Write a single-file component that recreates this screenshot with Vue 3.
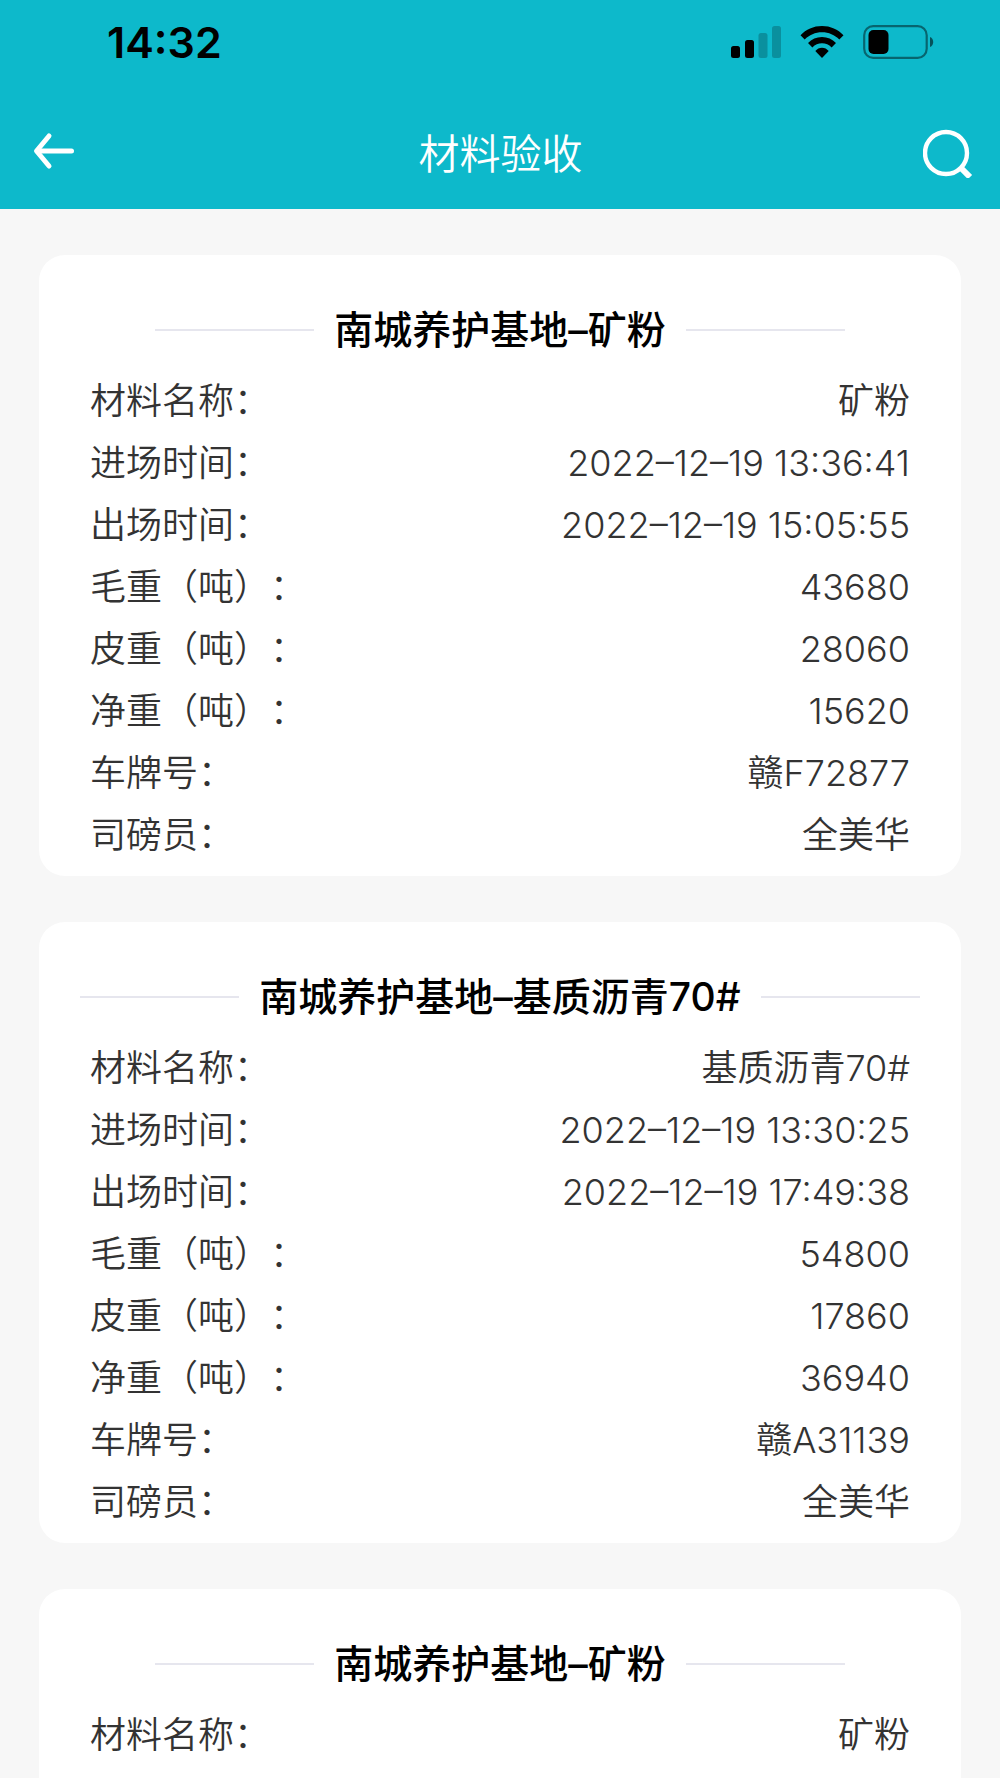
<template>
  <div class="page">
    <header class="header">
      <div class="status-bar">
        <span class="status-time">14:32</span>
        <div class="status-icons">
          <svg width="50" height="32" viewBox="0 0 50 32" aria-hidden="true">
            <rect x="0" y="20" width="9" height="12" rx="2.5" />
            <rect x="14" y="14" width="9" height="18" rx="2.5" />
            <rect x="27.500" y="7" width="9" height="25" rx="2.5" opacity="0.22" />
            <rect x="41" y="0" width="9" height="32" rx="2.5" opacity="0.22" />
          </svg>
          <svg width="44" height="32" viewBox="0 0 44 32" aria-hidden="true">
            <path d="M22 0C30.500 0 38 3.400 43.500 9.200L39.300 13.500C34.700 9 28.800 6.300 22 6.300S9.300 9 4.700 13.500L0.500 9.200C6 3.400 13.500 0 22 0Z" />
            <path d="M22 11C27.500 11 32.300 13.200 36 17L31.600 21.400C29 18.800 25.700 17.300 22 17.300S15 18.800 12.400 21.400L8 17C11.700 13.200 16.500 11 22 11Z" />
            <path d="M22 21.700C24.600 21.700 26.900 22.900 28.700 25L22 32L15.300 25C17.100 22.900 19.400 21.700 22 21.700Z" />
          </svg>
          <svg width="72" height="34" viewBox="0 0 72 34" aria-hidden="true">
            <rect x="1.200" y="1.200" width="62.500" height="31.600" rx="9" fill="none" stroke="#000" stroke-width="2.200" opacity="0.45" />
            <rect x="5.500" y="5" width="20" height="24" rx="5" />
            <path d="M67 12C71.300 13.800 71.300 20.200 67 22Z" opacity="0.55" />
          </svg>
        </div>
      </div>
      <nav class="nav-bar">
        <button type="button" class="nav-button" aria-label="返回">
          <svg width="46" height="42" viewBox="0 0 46 42" fill="none" stroke="#fff" stroke-width="5" stroke-linecap="round" stroke-linejoin="round">
            <path d="M17 4L4.500 19L17 34" />
            <path d="M5.500 19H39.500" />
          </svg>
        </button>
        <h1 class="nav-title">材料验收</h1>
        <button type="button" class="nav-button" aria-label="搜索">
          <svg width="50" height="50" viewBox="0 0 50 50" fill="none" stroke="#fff">
            <circle cx="23" cy="25" r="21" stroke-width="4.400" />
            <path d="M37.500 39.500L47 49" stroke-width="6" />
          </svg>
        </button>
      </nav>
    </header>

    <main class="list">
      <article v-for="(item, index) in records" :key="index" class="card">
        <h2 class="card-title">{{ item.base }}–{{ item.material }}</h2>
        <dl class="fields">
          <div v-for="field in filledFields(item)" :key="field.key" class="field">
            <dt>{{ field.label }}：</dt>
            <dd>{{ item[field.key] }}</dd>
          </div>
        </dl>
      </article>
    </main>
  </div>
</template>

<script setup>
import { ref } from 'vue'

const fields = [
  { key: 'material', label: '材料名称' },
  { key: 'enterTime', label: '进场时间' },
  { key: 'leaveTime', label: '出场时间' },
  { key: 'gross', label: '毛重（吨）' },
  { key: 'tare', label: '皮重（吨）' },
  { key: 'net', label: '净重（吨）' },
  { key: 'plate', label: '车牌号' },
  { key: 'weigher', label: '司磅员' }
]

const records = ref([
  {
    base: '南城养护基地',
    material: '矿粉',
    enterTime: '2022–12–19 13:36:41',
    leaveTime: '2022–12–19 15:05:55',
    gross: 43680,
    tare: 28060,
    net: 15620,
    plate: '赣F72877',
    weigher: '全美华'
  },
  {
    base: '南城养护基地',
    material: '基质沥青70#',
    enterTime: '2022–12–19 13:30:25',
    leaveTime: '2022–12–19 17:49:38',
    gross: 54800,
    tare: 17860,
    net: 36940,
    plate: '赣A31139',
    weigher: '全美华'
  },
  {
    base: '南城养护基地',
    material: '矿粉'
  }
])

// Skip rows the record has no value for
function filledFields(item) {
  return fields.filter((field) => item[field.key] !== undefined)
}
</script>

<style>
body {
  margin: 0;
  background: #f7f7f7;
}
</style>

<style scoped>
.page {
  display: flex;
  flex-direction: column;
  height: 100vh;
  background: #f7f7f7;
  color: #333;
  font-family: Inter, "Noto Sans CJK SC", sans-serif;
  text-spacing-trim: space-all;
}

.header {
  flex: none;
  background: #0db9cb;
}

.status-bar {
  display: flex;
  justify-content: space-between;
  align-items: center;
  height: 84px;
  padding: 0 65px 0 107px;
  color: #000;
}

.status-time {
  font-size: 43px;
  font-weight: 600;
}

.status-icons {
  display: flex;
  align-items: center;
  gap: 19px;
}

.nav-bar {
  display: flex;
  justify-content: space-between;
  align-items: center;
  height: 113px;
  padding: 12px 27px 0 32px;
}

.nav-button {
  display: flex;
  justify-content: center;
  align-items: center;
  padding: 0;
  border: 0;
  background: none;
  cursor: pointer;
}

.nav-title {
  margin: 0;
  padding-bottom: 4px;
  color: #fff;
  font-size: 41px;
  font-weight: 350;
}

.list {
  display: flex;
  flex: 1;
  flex-direction: column;
  gap: 46px;
  min-height: 0;
  padding: 46px 39px;
  overflow-y: auto;
  scrollbar-width: none;
}

.card {
  flex: none;
  min-height: 560px;
  padding: 45px 0 10px;
  border-radius: 26px;
  background: #fff;
}

.card-title {
  display: flex;
  justify-content: center;
  align-items: center;
  gap: 20px;
  margin: 0 0 10px;
  color: #000;
  font-size: 39px;
  font-weight: 500;
  line-height: 60px;
}

.card-title::before,
.card-title::after {
  content: "";
  width: 159px;
  height: 2px;
  background: #e6e6ee;
}

.fields {
  margin: 0;
  padding: 0 51px;
}

.field {
  display: flex;
  justify-content: space-between;
  font-size: 36px;
  font-weight: 350;
  line-height: 62px;
}

.field dd {
  margin: 0;
}
</style>
